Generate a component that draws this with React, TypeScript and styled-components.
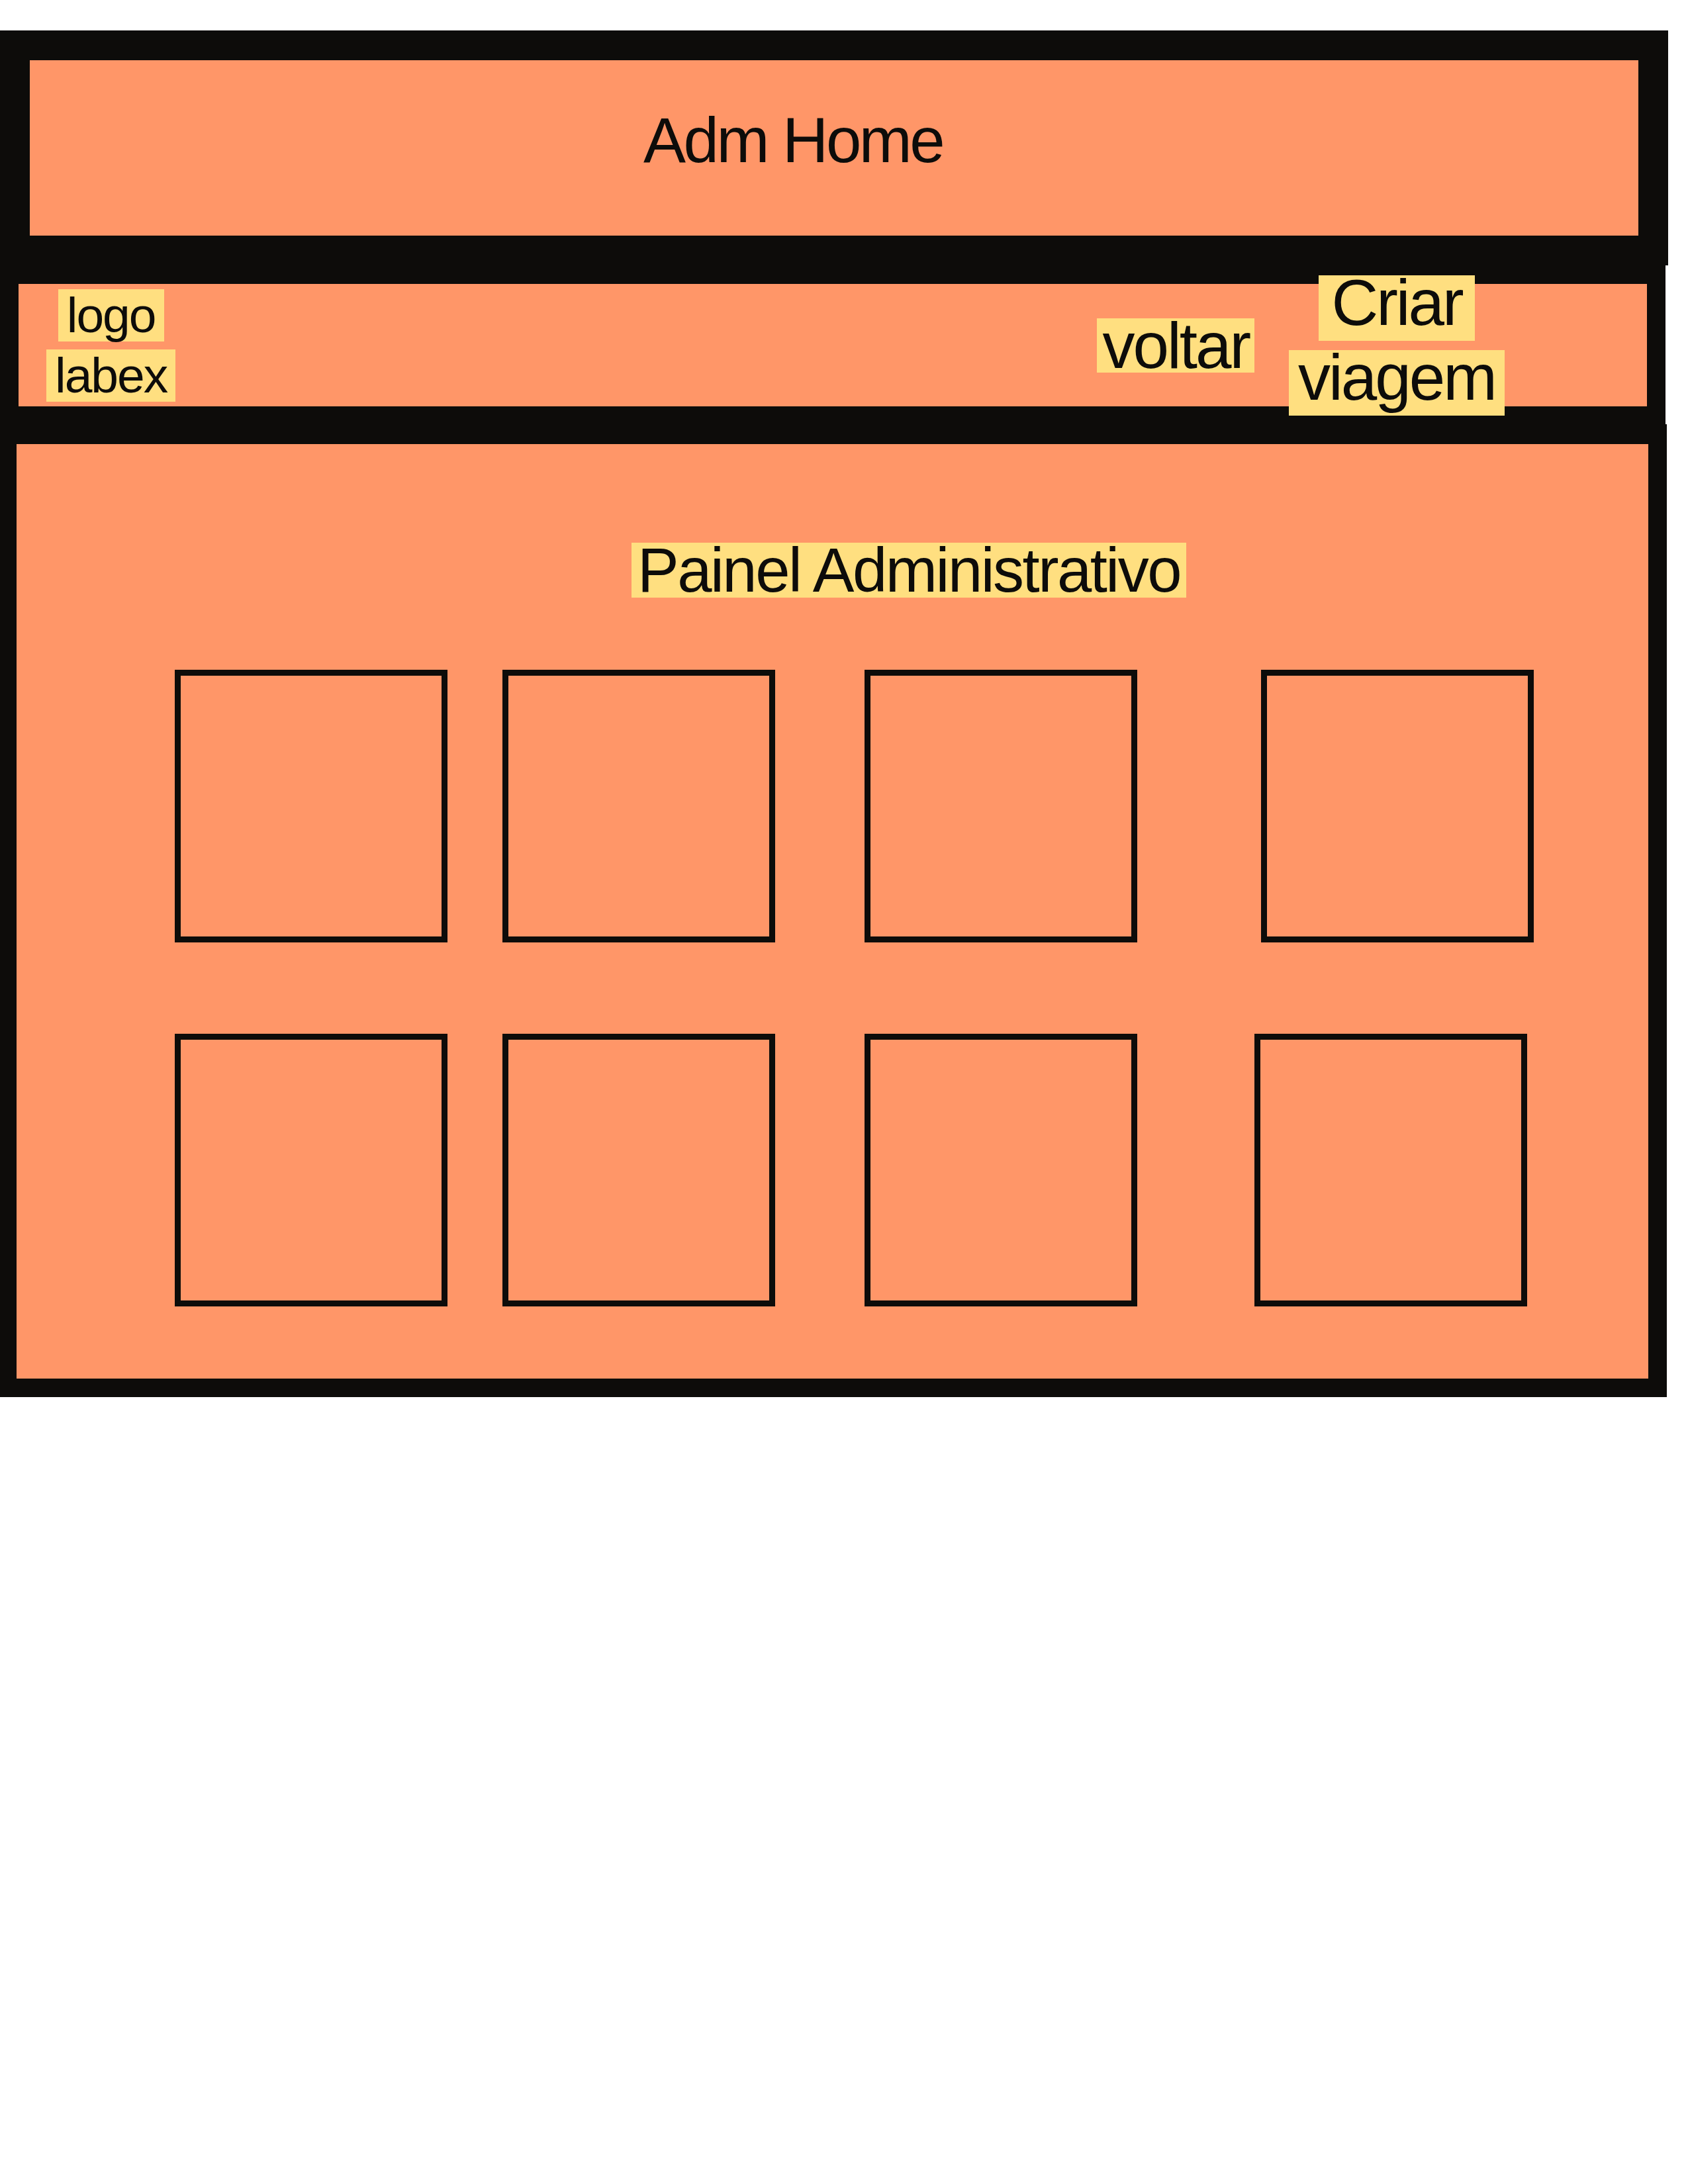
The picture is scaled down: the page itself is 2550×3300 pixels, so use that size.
import React, { FC } from "react";
import styled, { createGlobalStyle } from "styled-components";

const colors = {
  ink: "#0d0c0a",
  orange: "#ff9668",
  yellow: "#ffdf80",
  white: "#ffffff",
};

const GlobalStyle = createGlobalStyle`
  html, body {
    margin: 0;
    padding: 0;
    background: ${colors.white};
  }
  body {
    font-family: "Liberation Sans", Arial, sans-serif;
    color: ${colors.ink};
  }
  * {
    box-sizing: border-box;
  }
`;

const Page = styled.div`
  display: flex;
  flex-direction: column;
  align-items: flex-start;
  padding-top: 46px;
  min-height: 3300px;
`;

// Title bar
const TitleBar = styled.header`
  display: flex;
  align-items: flex-start;
  width: 2520px;
  height: 355px;
  padding: 76px 0 0 927px;
  background: ${colors.orange};
  border: 45px solid ${colors.ink};
`;

const Title = styled.h1`
  margin: 0;
  font-size: 96px;
  font-weight: 400;
  line-height: 90px;
  letter-spacing: -3.5px;
`;

// Nav bar
const NavBar = styled.nav`
  display: flex;
  align-items: center;
  width: 2516px;
  height: 240px;
  padding: 0 215px 0 42px;
  background: ${colors.orange};
  border: 28px solid ${colors.ink};
  border-bottom-width: 27px;
`;

const Stack = styled.div<{ $gap: number }>`
  display: flex;
  flex-direction: column;
  align-items: center;
  gap: ${(p) => p.$gap}px;
`;

const Actions = styled.div`
  display: flex;
  align-items: center;
  gap: 52px;
  margin-left: auto;
`;

const Highlight = styled.span<{
  $size: number;
  $line: number;
  $padX: number;
  $padBottom?: number;
  $tracking?: number;
}>`
  display: inline-block;
  background: ${colors.yellow};
  font-size: ${(p) => p.$size}px;
  line-height: ${(p) => p.$line}px;
  letter-spacing: ${(p) => p.$tracking || 0}px;
  padding: 0 ${(p) => p.$padX}px ${(p) => p.$padBottom || 0}px;
  white-space: nowrap;
`;

// Main panel
const Panel = styled.main`
  display: flex;
  flex-direction: column;
  align-items: flex-start;
  width: 2518px;
  height: 1470px;
  background: ${colors.orange};
  border-style: solid;
  border-color: ${colors.ink};
  border-width: 30px 28px 28px 25px;
`;

const PanelTitle = styled.h2`
  margin: 149px 0 0 929px;
  font-weight: 400;
`;

const CardRow = styled.div<{ $top: number }>`
  display: flex;
  margin-top: ${(p) => p.$top}px;
`;

const Card = styled.div<{ $offset: number }>`
  width: 412px;
  height: 412px;
  margin-left: ${(p) => p.$offset}px;
  border: 9px solid ${colors.ink};
`;

const rows = [
  { top: 109, offsets: [239, 83, 135, 187] },
  { top: 138, offsets: [239, 83, 135, 177] },
];

const App: FC = () => (
  <>
    <GlobalStyle />
    <Page>
      <TitleBar>
        <Title>Adm Home</Title>
      </TitleBar>

      <NavBar>
        <Stack $gap={12}>
          <Highlight $size={75} $line={79} $padX={13} $tracking={-2}>
            logo
          </Highlight>
          <Highlight $size={75} $line={79} $padX={13} $tracking={-2}>
            labex
          </Highlight>
        </Stack>
        <Actions>
          <Highlight $size={98} $line={82} $padX={8} $tracking={-3}>
            voltar
          </Highlight>
          <Stack $gap={14}>
            <Highlight
              $size={98}
              $line={82}
              $padX={19}
              $padBottom={17}
              $tracking={-3}
            >
              Criar
            </Highlight>
            <Highlight
              $size={98}
              $line={82}
              $padX={14}
              $padBottom={17}
              $tracking={-3}
            >
              viagem
            </Highlight>
          </Stack>
        </Actions>
      </NavBar>

      <Panel>
        <PanelTitle>
          <Highlight $size={94} $line={83} $padX={9} $tracking={-2.5}>
            Painel Administrativo
          </Highlight>
        </PanelTitle>
        {rows.map((row, r) => (
          <CardRow key={r} $top={row.top}>
            {row.offsets.map((offset, i) => (
              <Card key={i} $offset={offset} />
            ))}
          </CardRow>
        ))}
      </Panel>
    </Page>
  </>
);

export default App;
